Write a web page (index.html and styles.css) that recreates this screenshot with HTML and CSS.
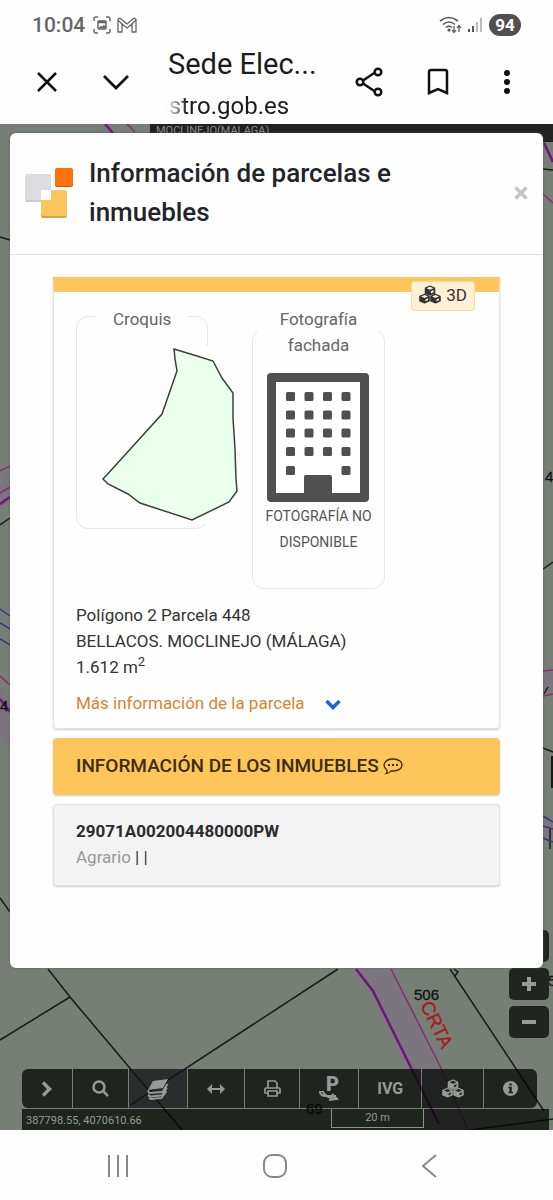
FILE: index.html
```html
<!DOCTYPE html>
<html lang="es">
<head>
    <meta charset="UTF-8">
    <meta name="viewport" content="width=device-width, initial-scale=1.0">
    <title>Sede Electrónica del Catastro</title>
    <link rel="stylesheet" href="styles.css">
</head>
<body>
    <svg class="sprite" aria-hidden="true">
        <symbol id="cubes" viewBox="0 0 24 20">
            <g stroke-linejoin="round" stroke-width="1.500">
                <path fill="currentColor" stroke="currentColor" d="M12 1l5 2v5.500l-5 2-5-2V3zM6 10l5 2v5l-5 2-5-2v-5zM18 10l5 2v5l-5 2-5-2v-5z"/>
                <path class="cube-face" d="M12 1.500l3.800 1.600L12 4.700 8.200 3.100zM13 6.400l2.800-1.200v2.400l-2.800 1.200zM6 10.600l3.800 1.600L6 13.800 2.200 12.200zM7 15.400l2.800-1.200v2l-2.800 1.200zM18 10.600l3.800 1.600-3.800 1.600-3.800-1.600zM19 15.400l2.800-1.200v2l-2.800 1.200z"/>
            </g>
        </symbol>
    </svg>

    <div class="status-bar">
        <span class="clock">10:04</span>
        <svg width="18" height="18" viewBox="0 0 18 18" fill="none" stroke="#666" stroke-width="1.500">
            <path d="M1 5V3q0-2 2-2h2M13 1h2q2 0 2 2v2M17 13v2q0 2-2 2h-2M5 17H3q-2 0-2-2v-2"/>
            <rect x="5" y="5" width="8" height="8" rx="1"/>
            <path fill="#666" d="M5 7V5h8v2zM6 12l2-2 1 1 2-2 2 3z" stroke-width=".5"/>
        </svg>
        <svg width="20" height="16" viewBox="0 0 20 16" fill="none" stroke="#666" stroke-width="1.300" stroke-linejoin="round">
            <path d="M1 15V3q0-2 2.500-1.500L10 7l6.500-5.500Q19 1 19 3v12h-4V7l-5 4-5-4v8z"/>
            <path d="M1 3l4 4M19 3l-4 4"/>
        </svg>
        <span class="status-right">
            <svg width="24" height="18" viewBox="0 0 24 18" fill="none" stroke="#555" stroke-width="1.600">
                <path d="M1 5q9-7 18 0M4 8.500q6-5 12 0M7 11.500q3-2.500 6 0"/>
                <circle cx="10" cy="14" r=".8" fill="#555"/>
                <path stroke-width="1.200" d="M15 10v6m-2-2l2 2.500 2-2.500M20 16v-6m-2 2l2-2.500 2 2.500"/>
            </svg>
            <svg width="16" height="16" viewBox="0 0 16 16">
                <path fill="#555" d="M1 12h2v3H1zM5 9h2v6H5z"/>
                <path fill="#bbb" d="M9 5h2v10H9zM13 1h2v14h-2z"/>
            </svg>
            <span class="battery">94</span>
        </span>
    </div>

    <header class="browser-bar">
        <button type="button" aria-label="Cerrar">
            <svg width="22" height="22" viewBox="0 0 22 22" fill="none" stroke="#111" stroke-width="2.500"><path d="M2 2l18 18M20 2L2 20"/></svg>
        </button>
        <button type="button" aria-label="Minimizar">
            <svg width="28" height="18" viewBox="0 0 28 18" fill="none" stroke="#111" stroke-width="2.800"><path d="M2 3l12 12L26 3"/></svg>
        </button>
        <div class="page-info">
            <div class="page-title">Sede Elec...</div>
            <div class="page-url">istro.gob.es</div>
        </div>
        <button type="button" aria-label="Compartir">
            <svg width="28" height="30" viewBox="0 0 28 30" fill="none" stroke="#111" stroke-width="2.500">
                <path d="M8 13.500l12-8M8 16.500l12 8"/><circle cx="5" cy="15" r="3.300"/><circle cx="23" cy="5" r="3.300"/><circle cx="23" cy="25" r="3.300"/>
            </svg>
        </button>
        <button type="button" aria-label="Guardar">
            <svg width="22" height="28" viewBox="0 0 22 28" fill="none" stroke="#111" stroke-width="2.500"><path d="M2 25V4q0-2 2-2h14q2 0 2 2v21l-9-4z"/></svg>
        </button>
        <button type="button" aria-label="Más opciones">
            <svg width="8" height="26" viewBox="0 0 8 26" fill="#111"><circle cx="4" cy="4" r="3"/><circle cx="4" cy="13" r="3"/><circle cx="4" cy="22" r="3"/></svg>
        </button>
    </header>

    <main class="map">
        <svg class="map-canvas" viewBox="0 0 553 1006" preserveAspectRatio="xMidYMin slice" fill="none">
            <!-- roads -->
            <path fill="#7b767d" d="M0 385l12-8v-40L0 362zM0 562l10 14v52L0 610zM543 545l10-2v24l-10 2zM543 690l10 5v20l-10-4zM356 845l22 30 64 130h26l-78-160z"/>
            <!-- parcel limits -->
            <g stroke="#171b17" stroke-width="1.500">
                <path d="M0 113l10 3M0 401l10-7M0 774l10 14M48 845l22 28 112 133M70 873L0 916M338 845L148 969 131 981 M450 845l94 142M454 845l4 3-4 5M470 1006l83-11M543 45l10 1M543 445l10-7M543 624l10 4M550 705v20M544 570l4-7"/>
                <path stroke-width="4" d="M553 632v32"/>
            </g>
            <g stroke="#6e1679" stroke-width="2.500">
                <path d="M0 380l10-7M105 0l8 9M356 845l17 22 66 133M0 575l10 13M544 19l9 19"/>
            </g>
            <g stroke="#8a2b75" stroke-width="1.500">
                <path d="M127 0l8 8M0 347l10-5M0 369l10-6M0 552l10 9M543 547l10-1M543 572l10-2M391 845l52 103 25 58M543 70l10 9"/>
            </g>
            <g stroke="#3a367f" stroke-width="1.500">
                <path d="M0 485l10 7M0 499l10 6M0 515l10 6M543 692l10 6M543 702l10 3M543 714l10 4"/>
            </g>
            <g class="map-labels">
                <text x="414" y="876">506</text>
                <text x="306" y="990">69</text>
                <text x="0" y="587">4</text>
                <text x="545" y="358">4</text>
                <text x="548" y="862">5</text>
                <text class="road-name" transform="translate(420 881) rotate(64)">CRTA</text>
            </g>
        </svg>
        <div class="place-banner">MOCLINEJO(MALAGA)</div>

        <div class="zoom-controls">
            <button type="button" aria-label="Mi ubicación"></button>
            <button type="button" aria-label="Acercar">
                <svg width="14" height="14" viewBox="0 0 14 14" stroke="currentColor" stroke-width="4"><path d="M0 7h14M7 0v14"/></svg>
            </button>
            <button type="button" aria-label="Alejar">
                <svg width="14" height="14" viewBox="0 0 14 14" stroke="currentColor" stroke-width="4"><path d="M0 7h14"/></svg>
            </button>
        </div>

        <section class="modal" role="dialog" aria-labelledby="modal-title">
            <div class="modal-header">
                <svg class="logo" width="48" height="50" viewBox="0 0 48 50">
                    <rect x="0" y="7" width="26" height="27" rx="2" fill="#ccc"/>
                    <rect x="0" y="6" width="26" height="26" rx="2" fill="#dcdcde"/>
                    <rect x="16" y="23" width="26" height="27" rx="2" fill="#d6a552"/>
                    <rect x="16" y="22" width="26" height="26" rx="2" fill="#fdc65a"/>
                    <rect x="16" y="22" width="10" height="10" fill="#fff"/>
                    <rect x="30" y="1" width="18" height="18" rx="2" fill="#d75c0b"/>
                    <rect x="30" y="0" width="18" height="18" rx="2" fill="#fd7209"/>
                </svg>
                <h1 id="modal-title">Información de parcelas e inmuebles</h1>
                <button type="button" class="close" aria-label="Cerrar">
                    <svg width="14" height="14" viewBox="0 0 14 14" stroke="#c4c4c4" stroke-width="3.500"><path d="M1.500 1.500l11 11M12.500 1.500l-11 11"/></svg>
                </button>
            </div>

            <div class="modal-body">
                <article class="card parcel">
                    <a href="#" class="btn-3d"><svg width="22" height="19"><use href="#cubes"/></svg>3D</a>
                    <div class="figures">
                        <fieldset>
                            <legend>Croquis</legend>
                            <svg class="sketch" width="138" height="178" viewBox="101 345 138 178">
                                <rect x="101" y="345" width="138" height="178" fill="#fefefe"/>
                                <path fill="#ebffee" stroke="#3c3f3c" stroke-width="1.500" d="M174 348l23 7 16 5 9 17 11 15v25l2 31 1 30 1 12-8 11-37 18-52-17-12-9-20-10-5-5 11-12 48-53 15-43-2-12z"/>
                            </svg>
                        </fieldset>
                        <fieldset>
                            <legend>Fotografía fachada</legend>
                            <svg class="building" width="102" height="129" viewBox="0 0 102 129">
                                <rect width="102" height="129" rx="4" fill="#505050"/>
                                <rect x="9" y="9" width="84" height="111" fill="#fff"/>
                                <rect x="37" y="102" width="28" height="24" rx="2" fill="#505050"/>
                                <g stroke="#505050" stroke-width="3" stroke-linejoin="round" fill="#505050">
                                    <path d="M20.500 20.500h6v6h-6zM39 20.500h6v6h-6zM57.500 20.500h6v6h-6zM76 20.500h6v6h-6zM20.500 39h6v6h-6zM39 39h6v6h-6zM57.500 39h6v6h-6zM76 39h6v6h-6zM20.500 57h6v6h-6zM39 57h6v6h-6zM57.500 57h6v6h-6zM76 57h6v6h-6zM20.500 75.500h6v6h-6zM39 75.500h6v6h-6zM57.500 75.500h6v6h-6zM76 75.500h6v6h-6zM20.500 94.500h6v6h-6zM76 94.500h6v6h-6z"/>
                                </g>
                            </svg>
                            <p class="no-photo">FOTOGRAFÍA NO DISPONIBLE</p>
                        </fieldset>
                    </div>
                    <p class="address">
                        Polígono 2 Parcela 448<br>
                        BELLACOS. MOCLINEJO (MÁLAGA)<br>
                        1.612 m<sup>2</sup>
                    </p>
                    <a href="#" class="more">Más información de la parcela
                        <svg width="16" height="11" viewBox="0 0 16 11" fill="none" stroke="#1767d8" stroke-width="3.500"><path d="M1.500 2L8 8.500 14.500 2"/></svg>
                    </a>
                </article>

                <h2 class="card">INFORMACIÓN DE LOS INMUEBLES
                    <svg width="20" height="17" viewBox="0 0 20 17" fill="none" stroke="currentColor" stroke-width="1.300">
                        <path d="M3.500 11.500C-1 8 1 1 10 1c6 0 9 3 9 6s-3 6-9 6l-2 0c-1 1.500-3 2.500-5 2.500 1-1 1.500-2.500.5-4z"/>
                        <path stroke-width="2" d="M5 7h2M9 7h2M13 7h2"/>
                    </svg>
                </h2>

                <article class="card property">
                    <strong>29071A002004480000PW</strong>
                    <div><span class="use">Agrario</span> | |</div>
                </article>
            </div>
        </section>

        <div class="map-footer">
            <div class="toolbar">
                <button type="button" aria-label="Mostrar más"><svg width="12" height="16" viewBox="0 0 12 16" fill="none" stroke="currentColor" stroke-width="3.500"><path d="M2 1.500L8.500 8 2 14.500"/></svg></button>
                <button type="button" aria-label="Buscar"><svg width="17" height="17" viewBox="0 0 17 17" fill="none" stroke="currentColor" stroke-width="2.500"><circle cx="7" cy="7" r="5.500"/><path d="M11 11l5 5"/></svg></button>
                <button type="button" class="active" aria-label="Capas"><svg width="22" height="22" viewBox="0 0 22 22" fill="currentColor"><path d="M6 3L21 1l-5 9L1 12z"/><path fill="none" stroke="currentColor" stroke-width="1.800" d="M1.500 12q-1 3 2 3l12-1 5-8M2 16q-1 2.500 2 2.500l11-1 5-8M2.500 19.500q0 1.500 2 1.500l10-1 5-7"/></svg></button>
                <button type="button" aria-label="Medir"><svg width="18" height="10" viewBox="0 0 18 10" fill="currentColor"><path d="M0 5l5-5v4h8V0l5 5-5 5V6H5v4z"/></svg></button>
                <button type="button" aria-label="Imprimir"><svg width="17" height="17" viewBox="0 0 17 17" fill="none" stroke="currentColor" stroke-width="1.700"><path d="M4 8V1h7l2 2v5M3.500 13H1V9q0-1 1-1h13q1 0 1 1v4h-2.500M4 11h9v5H4z"/></svg></button>
                <button type="button" class="parking" aria-label="Vista de calle"><b>P</b><svg width="20" height="10" viewBox="0 0 20 10" fill="none" stroke="currentColor" stroke-width="2"><path d="M5 0H1q0 5 6 5h10M4 1q3 6 14 7M13 3l5 5-8 1"/></svg></button>
                <button type="button" class="ivg">IVG</button>
                <button type="button" aria-label="Vista 3D"><svg width="22" height="19"><use href="#cubes"/></svg></button>
                <button type="button" aria-label="Información"><svg width="15" height="15" viewBox="0 0 15 15"><circle cx="7.500" cy="7.500" r="7.500" fill="currentColor"/><path fill="#1f241f" d="M6.300 2.500h2.500v2H6.300zM5.300 5.800h3.500v4.900H10v1.600H5.300v-1.600h1.100V7.300H5.300z"/></svg></button>
            </div>
            <div class="coords">
                <span>387798.55, 4070610.66</span>
                <span class="scale">20 m</span>
            </div>
        </div>
    </main>

    <nav class="system-nav">
        <button type="button" aria-label="Recientes"><svg width="22" height="22" viewBox="0 0 22 22" stroke="#888" stroke-width="2"><path d="M2 0v22M11 0v22M20 0v22"/></svg></button>
        <button type="button" aria-label="Inicio"><svg width="24" height="24" viewBox="0 0 24 24" fill="none" stroke="#888" stroke-width="2"><rect x="1" y="1" width="22" height="22" rx="8"/></svg></button>
        <button type="button" aria-label="Atrás"><svg width="16" height="24" viewBox="0 0 16 24" fill="none" stroke="#888" stroke-width="2"><path d="M15 1L2 12l13 11"/></svg></button>
    </nav>
</body>
</html>
```
FILE: styles.css
```css
* {
    box-sizing: border-box;
}

body {
    display: flex;
    flex-direction: column;
    min-height: 100vh;
    margin: 0;
    font-family: Roboto, 'Helvetica Neue', Arial, sans-serif;
    font-size: 17px;
    line-height: 26px;
    color: #333;
    background: #fefefe;
}

button {
    display: flex;
    align-items: center;
    justify-content: center;
    padding: 0;
    border: none;
    background: none;
    font-family: inherit;
    color: inherit;
    cursor: pointer;
}

a {
    text-decoration: none;
}

.sprite {
    display: none;
}

.cube-face {
    fill: var(--face, #fdf0d4);
}

/* phone status bar */
.status-bar {
    display: flex;
    align-items: center;
    gap: 6px;
    height: 48px;
    padding: 2px 32px 0;
}

.clock {
    margin-right: 2px;
    font-size: 21px;
    font-weight: 500;
    color: #666;
}

.status-right {
    display: flex;
    align-items: center;
    gap: 4px;
    margin-left: auto;
}

.battery {
    width: 32px;
    margin-left: 2px;
    border-radius: 11px;
    background: #505050;
    color: #fff;
    font-size: 17px;
    font-weight: 700;
    line-height: 22px;
    text-align: center;
}

/* in-app browser bar */
.browser-bar {
    display: flex;
    align-items: center;
    height: 76px;
    padding: 0 12px;
}

.browser-bar button {
    flex: 0 0 69px;
    height: 48px;
    margin-top: -8px;
}

.page-info {
    flex: 1;
    min-width: 0;
    padding: 0 0 5px 18px;
    color: #1b1b1b;
    white-space: nowrap;
}

.page-title {
    font-size: 29px;
    line-height: 32px;
}

.page-url {
    padding-top: 12px;
    margin-left: -5px;
    font-size: 24px;
    line-height: 28px;
    -webkit-mask-image: linear-gradient(to right, transparent 3px, #000 24px);
    mask-image: linear-gradient(to right, transparent 3px, #000 24px);
}

/* map */
.map {
    position: relative;
    display: flex;
    flex: 1;
    flex-direction: column;
    background: #767e76;
    overflow: hidden;
}

.map-canvas {
    position: absolute;
    top: 0;
    left: 0;
    width: 100%;
    height: 100%;
}

.map-labels {
    fill: #111;
    stroke: #111;
    stroke-width: .3;
    font-family: 'Liberation Sans', Arial, sans-serif;
    font-size: 15px;
}

.map-labels .road-name {
    fill: #a51d18;
    stroke: #a51d18;
    font-size: 19px;
}

.place-banner {
    position: absolute;
    top: 0;
    right: 0;
    left: 150px;
    height: 18px;
    padding-left: 6px;
    background: #212122;
    color: #8a8a8a;
    font-size: 11px;
    line-height: 14px;
}

.zoom-controls {
    position: absolute;
    right: 4px;
    bottom: 92px;
    display: flex;
    flex-direction: column;
    gap: 6px;
}

.zoom-controls button {
    width: 40px;
    height: 32px;
    border-radius: 5px;
    background: #202520;
    color: #979b97;
}

/* modal */
.modal {
    position: relative;
    margin: 9px 10px 0;
    border-radius: 6px;
    background: #fefefe;
    box-shadow: 0 0 2px #555;
}

.modal-header {
    display: flex;
    align-items: center;
    gap: 16px;
    padding: 21px 15px 22px;
    border-bottom: 1px solid #e2e2e2;
}

.logo {
    flex: none;
}

.modal-header h1 {
    flex: 1;
    margin: 0;
    font-size: 26px;
    font-weight: 500;
    line-height: 39px;
    color: #212529;
}

.modal-body {
    display: flex;
    flex-direction: column;
    gap: 9px;
    padding: 22px 43px 82px;
}

.card {
    margin: 0;
    padding: 0 22px;
    border: 1px solid #e2e2e2;
    border-radius: 4px;
    box-shadow: 0 1px 2px #ccc;
}

.parcel {
    position: relative;
    padding-bottom: 12px;
    border-top: 15px solid #fdc65a;
    border-radius: 0 0 4px 4px;
}

.btn-3d {
    position: absolute;
    top: -11px;
    right: 24px;
    display: flex;
    align-items: center;
    gap: 5px;
    height: 30px;
    padding: 0 7px 3px;
    border: 1px solid #fbdc9c;
    border-radius: 3px;
    background: #fdf0d4;
    color: #333;
}

.figures {
    display: flex;
    align-items: flex-start;
    gap: 44px;
    padding-top: 8px;
}

fieldset {
    flex: 0 0 33%;
    min-width: 0;
    margin: 0;
    padding: 0 0 4px;
    border: 1px solid #e8e8e8;
    border-radius: 12px;
}

legend {
    max-width: 120px;
    margin: 0 auto 15px;
    padding: 6px 17px 0;
    color: #666;
    text-align: center;
}

.sketch {
    display: block;
    margin: -1px 0 0 24px;
}

.building {
    display: block;
    margin: 0 auto;
}

.no-photo {
    margin: 0;
    padding: 1px 8px 29px;
    font-size: 14px;
    color: #555;
    text-align: center;
}

.address {
    margin: 13px 0 10px;
}

.address sup {
    font-size: 13px;
    line-height: 0;
}

.more {
    display: inline-block;
    color: #d8842f;
}

.more svg {
    margin-left: 16px;
    vertical-align: -1px;
}

h2.card {
    padding: 14px 22px 15px;
    border-color: #f8c664;
    background: #fdc65a;
    color: #3e2c0b;
    font-size: 19px;
    font-weight: 500;
}

h2.card svg {
    vertical-align: -3px;
}

.property {
    padding-top: 13px;
    padding-bottom: 15px;
    background: #f3f3f3;
}

.property strong {
    color: #2b2b2b;
}

.use {
    color: #999;
}

/* map tools */
.map-footer {
    position: relative;
    margin: auto 4px 0 22px;
    color: #979b97;
}

.toolbar {
    --face: #202520;
    display: grid;
    grid-template-columns: 50fr 55fr 58fr 56fr 55fr 58fr 62fr 61fr 53fr;
    gap: 1px;
    margin-right: 12px;
}

.toolbar button {
    height: 39px;
    background: rgba(4, 8, 4, .76);
}

.toolbar .active {
    background: rgba(20, 18, 22, .76);
}

.toolbar button:first-child {
    border-radius: 6px 0 0 6px;
}

.toolbar button:last-child {
    border-radius: 0 6px 6px 0;
}

.toolbar .parking {
    flex-direction: column;
    font-size: 20px;
    line-height: 14px;
}

.parking b {
    padding-left: 6px;
    font-weight: 900;
}

.toolbar .ivg {
    font-size: 16px;
    font-weight: 700;
}

.coords {
    display: flex;
    justify-content: space-between;
    height: 21px;
    margin-top: 1px;
    padding: 0 125px 2px 4px;
    background: rgba(4, 8, 4, .76);
    font-size: 11px;
    line-height: 23px;
}

.scale {
    width: 93px;
    border: 1px solid #8d928d;
    border-top: none;
    line-height: 18px;
    text-align: center;
}

/* phone navigation */
.system-nav {
    display: flex;
    justify-content: space-between;
    height: 70px;
    padding: 2px 116px 0 107px;
}
```
